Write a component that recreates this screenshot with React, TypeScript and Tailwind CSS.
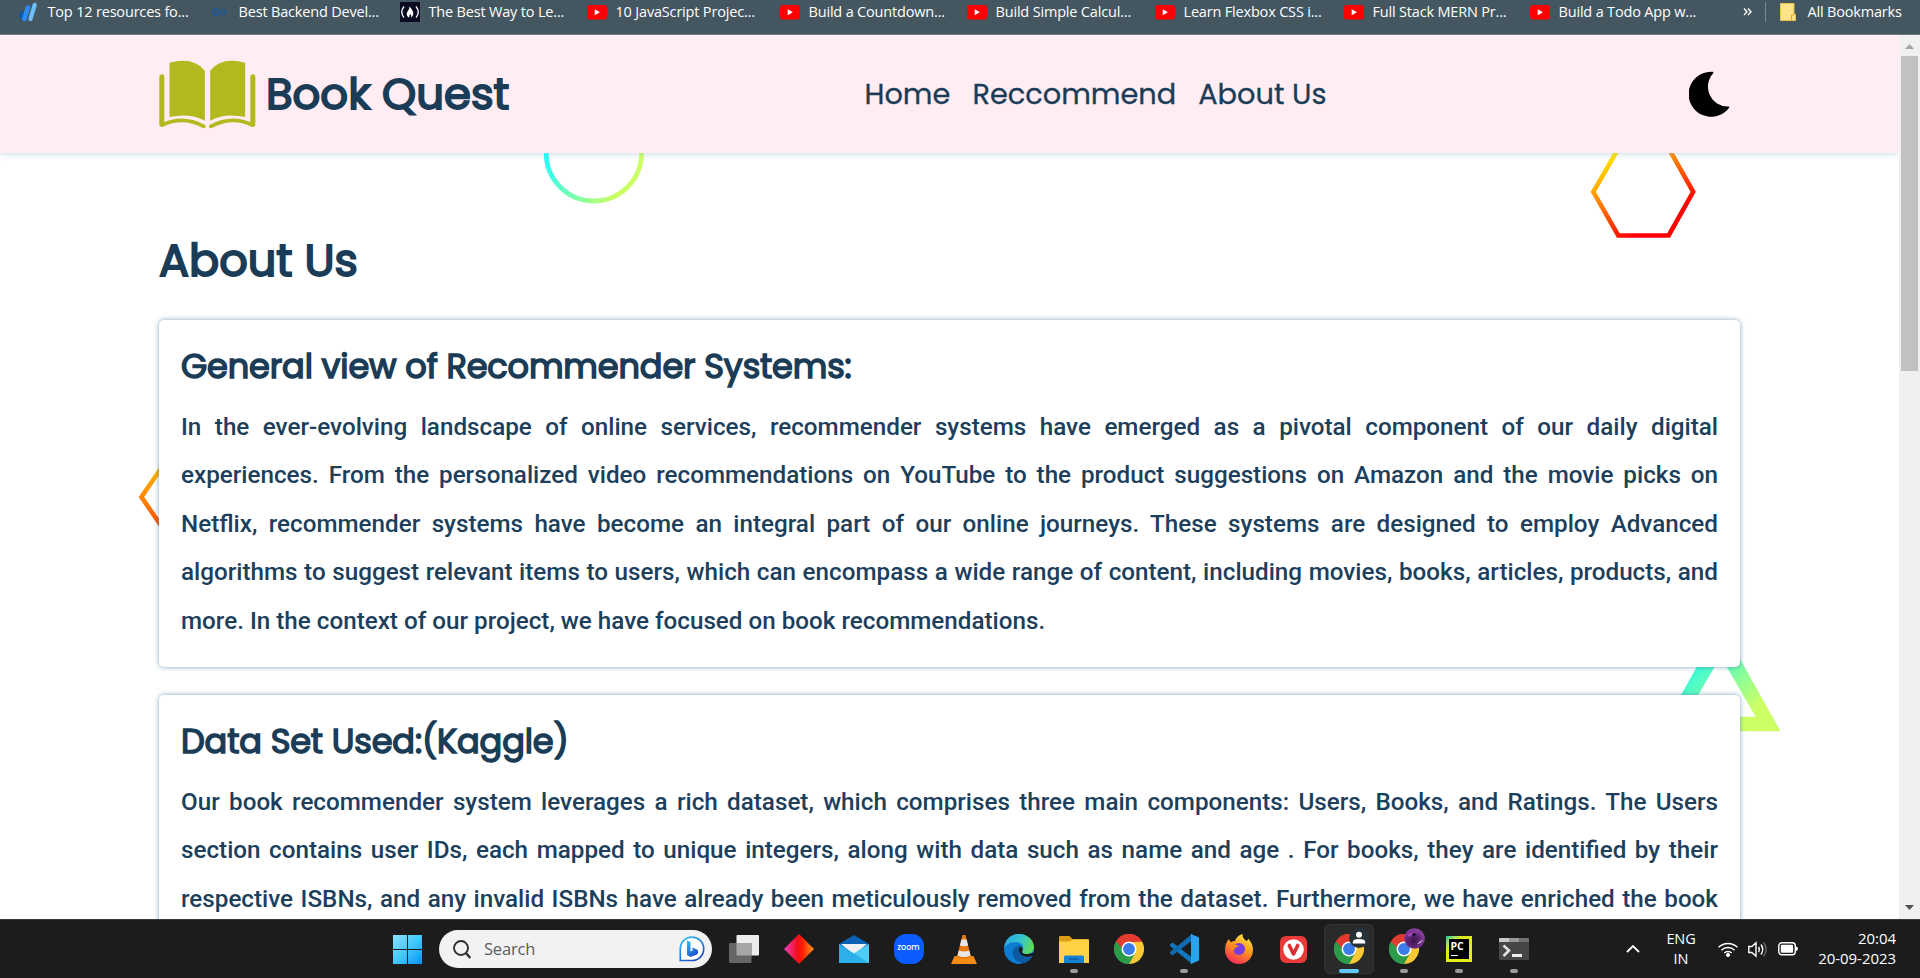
import React from "react";

function YouTubeIcon() {
  return (
    <svg className="h-[15px] w-5" viewBox="0 0 20 15">
      <rect width="20" height="14.5" rx="3" fill="#f00" />
      <path d="M7.7 4.2v6l5.2-3z" fill="#fff" />
    </svg>
  );
}

function StripesIcon() {
  return (
    <svg className="h-5 w-5" viewBox="0 0 20 20" fill="none" strokeLinecap="round">
      <path d="M2.5 11.5 2.2 15" stroke="#0a5aa8" strokeWidth="4" />
      <path d="M9 5.5 5.3 17" stroke="#2b8af5" strokeWidth="4.6" />
      <path d="M15.7 2.8 11.5 17" stroke="#6cc0ff" strokeWidth="4.2" />
    </svg>
  );
}

function InfinityIcon() {
  return (
    <svg className="h-4 w-5" viewBox="0 0 20 16" fill="none" stroke="#1b5a97" strokeWidth="1.6">
      <path d="M8.5 5.8C6.5 3.5 2.8 4.8 2.8 8s3.7 4.5 5.7 2.2l2-2.7c2-2.7 4.8-1.8 4.8.8s-2.8 3.3-4.6 1.4M5 8h3" />
    </svg>
  );
}

function CampIcon() {
  return (
    <svg className="h-5 w-5" viewBox="0 0 20 20">
      <rect width="20" height="20" fill="#0a0a23" />
      <path d="M4 4.5Q-.5 10 4 15.5M16 4.5Q20.5 10 16 15.5" stroke="#fff" strokeWidth="1.3" fill="none" />
      <path d="M9.3 4.5C12 7 13.5 9.5 13.3 12q-.3 2.5-2.3 3.5.8-1.8-.6-3.5-1.8 1.5-.9 3.5-2.8-.8-2.8-3.5 0-1.8 1.5-3.5 1.3-1.5 1.1-4z" fill="#fff" />
    </svg>
  );
}

const bookmarks = [
  { label: "Top 12 resources fo...", icon: <StripesIcon />, width: "w-[191px]" },
  { label: "Best Backend Devel...", icon: <InfinityIcon />, width: "w-[190px]" },
  { label: "The Best Way to Le...", icon: <CampIcon />, width: "w-[187px]" },
  { label: "10 JavaScript Projec...", icon: <YouTubeIcon />, width: "w-[193px]" },
  { label: "Build a Countdown...", icon: <YouTubeIcon />, width: "w-[187px]" },
  { label: "Build Simple Calcul...", icon: <YouTubeIcon />, width: "w-[188px]" },
  { label: "Learn Flexbox CSS i...", icon: <YouTubeIcon />, width: "w-[189px]" },
  { label: "Full Stack MERN Pr...", icon: <YouTubeIcon />, width: "w-[186px]" },
  { label: "Build a Todo App w...", icon: <YouTubeIcon />, width: "w-[213px]" },
];

function BookmarkBar() {
  return (
    <div className="flex h-[35px] shrink-0 items-start border-b border-[#6d7c84] bg-[#44565f] pl-[18.5px] font-['Open_Sans',sans-serif] text-[14.5px] leading-6 tracking-[-0.18px] text-white">
      {bookmarks.map((b) => (
        <div key={b.label} className={`flex h-6 shrink-0 items-center gap-[9px] whitespace-nowrap ${b.width}`}>
          {b.icon}
          <span>{b.label}</span>
        </div>
      ))}
      <svg className="mt-2 h-2 w-[9px]" viewBox="0 0 9 8" fill="none" stroke="#fff" strokeWidth="1.4">
        <path d="m1 .5 3 3.3-3 3.3M5 .5l3 3.3-3 3.3" />
      </svg>
      <div className="mt-0.5 ml-[13px] h-5 w-px bg-[#7c8990]" />
      <svg className="mt-[3px] ml-[14px] h-[18px] w-4" viewBox="0 0 16 18">
        <path d="M.5.5h13.5v11h1.5v6H.5z" fill="#ffe28a" stroke="#e8c24c" />
        <path d="M11.5 17.5v-5.5H14" fill="none" stroke="#d9a922" />
      </svg>
      <span className="ml-3 whitespace-nowrap">All Bookmarks</span>
    </div>
  );
}

function BookLogo() {
  return (
    <svg className="h-[69px] w-[97px]" viewBox="57 70 290 207">
      <g fill="#b0ba1f">
        <path d="M88 78Q160 60 194 102V252Q150 228 88 241Z" />
        <path d="M315 78Q243 60 210 102V252Q254 228 315 241Z" />
      </g>
      <g fill="none" stroke="#b0ba1f" strokeLinecap="round" strokeLinejoin="round">
        <path d="M65 120V263M338 120V263" strokeWidth="15" />
        <path d="M66 265Q128 235 191 269M337 265Q275 235 212 269" strokeWidth="11" />
      </g>
    </svg>
  );
}

function Header() {
  return (
    <header className="relative z-10 flex h-[118px] items-center bg-[#ffedf3] pl-[159px] font-[Poppins,Inter,sans-serif] text-[#1a3c56] shadow-[0_1px_6px_rgba(120,165,205,0.4)]">
      <div className="flex w-[705.5px] items-center gap-[10px]">
        <BookLogo />
        <span className="text-[43.4px] leading-none [-webkit-text-stroke:1.9px_#1a3c56]">Book Quest</span>
      </div>
      <nav className="flex gap-[22px] whitespace-nowrap text-[28.8px] leading-none [-webkit-text-stroke:0.3px_#1a3c56]">
        <a>Home</a>
        <a>Reccommend</a>
        <a>About Us</a>
      </nav>
      <svg className="mr-[169px] ml-auto h-[46px] w-[41px]" viewBox="0 0 41 46">
        <path d="M23.5.8A22.5 22.5 0 1 0 40.3 36.5Q40.5 35.3 39 35.5A19.8 19.8 0 0 1 24 2.5Q25 1 23.5.8Z" />
      </svg>
    </header>
  );
}

function BackgroundShapes() {
  return (
    <svg className="absolute inset-0 h-full w-full" viewBox="0 35 1899 885" fill="none">
      <defs>
        <linearGradient id="aqua" x1="0" y1="0.3" x2="1" y2="0.7">
          <stop offset="0.05" stopColor="#2ff" />
          <stop offset="0.85" stopColor="#cf6" />
        </linearGradient>
        <linearGradient id="tri" gradientUnits="userSpaceOnUse" x1="1697" y1="660" x2="1752" y2="713">
          <stop offset="0" stopColor="#2ffbe0" />
          <stop offset="1" stopColor="#cf6" />
        </linearGradient>
        <linearGradient id="fire" x1="0.1" y1="0.1" x2="0.7" y2="1">
          <stop offset="0" stopColor="#fe0" />
          <stop offset="0.85" stopColor="#f00" />
        </linearGradient>
        <linearGradient id="ember" x1="0" y1="0" x2="0.2" y2="1">
          <stop offset="0.1" stopColor="#ffc400" />
          <stop offset="0.9" stopColor="#f40" />
        </linearGradient>
      </defs>
      <circle cx="593.5" cy="153.5" r="47.7" stroke="url(#aqua)" strokeWidth="4.8" />
      <path d="M1594 192 1619.200 148.5H1669.500L1694 192 1669.500 235.700H1619Z" stroke="url(#fire)" strokeWidth="4.6" />
      <path d="M140.500 497.5 169 456H210L237 497.5 210 539H169Z" stroke="url(#ember)" strokeWidth="4.6" />
      <path d="M1721.500 625 1781.500 732H1661.500ZM1721.500 657 1686.500 717.5H1756.500Z" fill="url(#tri)" fillRule="evenodd" />
    </svg>
  );
}

const sections = [
  {
    title: "General view of Recommender Systems:",
    body: "In the ever-evolving landscape of online services, recommender systems have emerged as a pivotal component of our daily digital experiences. From the personalized video recommendations on YouTube to the product suggestions on Amazon and the movie picks on Netflix, recommender systems have become an integral part of our online journeys. These systems are designed to employ Advanced algorithms to suggest relevant items to users, which can encompass a wide range of content, including movies, books, articles, products, and more. In the context of our project, we have focused on book recommendations.",
    clipped: false,
  },
  {
    title: "Data Set Used:(Kaggle)",
    body: "Our book recommender system leverages a rich dataset, which comprises three main components: Users, Books, and Ratings. The Users section contains user IDs, each mapped to unique integers, along with data such as name and age . For books, they are identified by their respective ISBNs, and any invalid ISBNs have already been meticulously removed from the dataset. Furthermore, we have enriched the book",
    clipped: true,
  },
];

function Content() {
  return (
    <main className="relative flex w-[1740px] flex-col pl-[159px] text-[#1a3c56]">
      <h1 className="mt-[81px] font-[Poppins,Inter,sans-serif] text-[44.6px] leading-[54px] [-webkit-text-stroke:1.9px_#1a3c56]">About Us</h1>
      <div className="mt-[32px] flex flex-col gap-[28px]">
        {sections.map((s) => (
          <section
            key={s.title}
            className="h-[347px] w-[1581px] shrink-0 rounded-[5px] bg-white px-[22px] pt-[22px] shadow-[0_0_5px_rgba(70,125,170,0.7)]"
          >
            <h2 className="font-[Poppins,Inter,sans-serif] text-[33.6px] leading-[50px] tracking-[-0.14px] [-webkit-text-stroke:1.5px_#1a3c56]">{s.title}</h2>
            <p className={`mt-[11px] text-justify font-[Roboto,sans-serif] text-[24.22px] leading-[48.4px] font-medium text-[#1c405c] ${s.clipped ? "[text-align-last:justify]" : ""}`}>
              {s.body}
            </p>
          </section>
        ))}
      </div>
    </main>
  );
}

function Scrollbar() {
  return (
    <div className="flex w-[21px] shrink-0 flex-col items-center bg-[#f0f0f0]">
      <svg className="mt-[9px] h-[5px] w-[9px]" viewBox="0 0 9 5">
        <path d="M4.5 0 9 5H0z" fill="#a3a3a3" />
      </svg>
      <div className="mt-[7px] h-[315px] w-[17px] bg-[#c1c1c1]" />
      <svg className="mt-auto mb-[9px] h-[5px] w-[9px]" viewBox="0 0 9 5">
        <path d="M4.5 5 0 0h9z" fill="#505050" />
      </svg>
    </div>
  );
}

function ChromeIcon() {
  return (
    <svg className="h-[30px] w-[30px]" viewBox="0 0 48 48">
      <path d="M24 24 3.2 12A24 24 0 0 1 44.8 12Z" fill="#e33b2e" />
      <path d="M24 24 44.8 12A24 24 0 0 1 24 48Z" fill="#fcc934" />
      <path d="M24 24V48A24 24 0 0 1 3.2 12Z" fill="#2c9c4b" />
      <path d="M24 12H44.8L34.4 30 24 48 34 24Z" fill="#fcc934" />
      <path d="M13.6 30 3.2 12 14 24 24 36 34.4 30 24 48A24 24 0 0 1 3.2 12Z" fill="#2c9c4b" />
      <path d="M3.2 12A24 24 0 0 1 44.8 12L24 13 14 24Z" fill="#e33b2e" />
      <circle cx="24" cy="24" r="12" fill="#fff" />
      <circle cx="24" cy="24" r="9.5" fill="#3b7de8" />
    </svg>
  );
}

function WindowsIcon() {
  return (
    <svg className="h-[29px] w-[29px]" viewBox="0 0 29 29">
      <defs>
        <linearGradient id="win" gradientUnits="userSpaceOnUse" x1="0" y1="0" x2="29" y2="29">
          <stop stopColor="#8be0fd" />
          <stop offset="0.5" stopColor="#45c8fb" />
          <stop offset="1" stopColor="#0a90f5" />
        </linearGradient>
      </defs>
      <path d="M0 0h14v14H0zM15 0h14v14H15zM0 15h14v14H0zM15 15h14v14H15z" fill="url(#win)" />
    </svg>
  );
}

function BingIcon() {
  return (
    <svg className="h-[26px] w-[26px]" viewBox="0 0 26 26">
      <defs>
        <linearGradient id="bing" x1="0" y1="0" x2="0.6" y2="1">
          <stop stopColor="#35c3f5" />
          <stop offset="1" stopColor="#1b4fc9" />
        </linearGradient>
      </defs>
      <path d="M1.3 24.5V13A11.7 11.7 0 1 1 13 24.5Z" fill="#fff" stroke="url(#bing)" strokeWidth="1.7" />
      <path d="M8 4.5 11.5 6v9.5l2.500-1.300-1.300-3 5.300 2.300c1.600.9 1.600 3.800 0 5L11.500 21 8 19Z" fill="url(#bing)" />
    </svg>
  );
}

function TaskViewIcon() {
  return (
    <svg className="h-[28px] w-[30px]" viewBox="0 0 30 28">
      <rect x="7.5" width="22.5" height="20.5" rx="1" fill="#ededed" />
      <rect y="8" width="22.5" height="20" rx="1" fill="#666" />
      <rect x="7.5" y="8" width="15" height="12.5" fill="#a5a5a5" />
    </svg>
  );
}

function DiamondIcon() {
  return (
    <svg className="h-[30px] w-[30px]" viewBox="0 0 30 30">
      <defs>
        <linearGradient id="dia">
          <stop stopColor="#f03fc0" />
          <stop offset="0.45" stopColor="#f20d1e" />
          <stop offset="0.6" stopColor="#ff1a00" />
          <stop offset="1" stopColor="#ff9a1a" />
        </linearGradient>
      </defs>
      <path d="M15 0 30 15 15 30 0 15Z" fill="url(#dia)" />
    </svg>
  );
}

function MailIcon() {
  return (
    <svg className="h-[28px] w-[30px]" viewBox="0 0 30 28">
      <path d="M0 9 15 0l15 9v5H0Z" fill="#0b62b5" />
      <path d="M2 9h26L15 20Z" fill="#eef2f5" />
      <path d="M0 9 15 18.5 30 9V28H0Z" fill="#2cb0ea" />
      <path d="M30 9 15 18.5 30 28Z" fill="#50cdf7" />
    </svg>
  );
}

function ZoomIcon() {
  return (
    <div className="flex h-[30px] w-[30px] items-center justify-center rounded-[12px] bg-[#0b5cff] font-[Poppins,sans-serif] text-[8px] leading-none font-medium text-white">
      <span className="-mt-0.5">zoom</span>
    </div>
  );
}

function ConeIcon() {
  return (
    <svg className="h-[29px] w-[26px]" viewBox="0 0 26 29">
      <path d="M3.5 21h19l3.5 8H0Z" fill="#f58a14" />
      <path d="M11.5 0h3l5.5 22q-7 4-14 0Z" fill="#e67a10" />
      <path d="M10.4 4.5h5.2l1.5 6q-4 1.5-8.2 0ZM7.8 15.5q5 2 10.5 0l1.2 5q-6.500 3-13 0Z" fill="#e6e6e6" />
    </svg>
  );
}

function EdgeIcon() {
  return (
    <svg className="h-[30px] w-[30px]" viewBox="0 0 30 30">
      <defs>
        <linearGradient id="edgeTop" x1="0" y1="0.3" x2="1" y2="0.6">
          <stop stopColor="#2aa7e8" />
          <stop offset="0.5" stopColor="#36c5d0" />
          <stop offset="1" stopColor="#62dd50" />
        </linearGradient>
      </defs>
      <circle cx="15" cy="15" r="15" fill="#0f7cd3" />
      <path d="M0 14C1 5 7 0 15 0c9 0 15 6.500 15 13 0 5-4 7-7.500 7-4 0-5-1.500-4-3.500C21 11 16 8 11.500 8 6 8 2 11 0 14Z" fill="url(#edgeTop)" />
      <path d="M9 16c-2 6 3 13 11 13 4-1 7-4 8.500-7C22 26 14 22 15 15c.2-1.500 1-2.500 1-2.500C12 11.500 9.500 14 9 16Z" fill="#0c59a4" />
      <path d="M16 12.500c-2 2-1.500 8 4 10 4 1.300 8-.5 8.800-.7l1.200 1.200V18c-2 1.500-4.500 2-7.500 2-4 0-5-1.500-4-3.500.7-1.500 0-3.500-2.500-4Z" fill="#1c1c1c" />
    </svg>
  );
}

function FolderIcon() {
  return (
    <svg className="h-[27px] w-[30px]" viewBox="0 0 30 27">
      <path d="M0 1Q0 0 1 0h9.500l3 3H28q2 0 2 2v8H0Z" fill="#dc9d10" />
      <path d="M0 5.500h10.500L14 3.500h16V27H0Z" fill="#ffd145" />
      <path d="M5 27v-6q0-1.500 1.500-1.500h17Q25 19.500 25 21v6Z" fill="#1583d3" />
      <path d="M10 23h10" stroke="#0a5a9c" strokeWidth="1.3" />
    </svg>
  );
}

function VsCodeIcon() {
  return (
    <svg className="h-[30px] w-[30px]" viewBox="0 0 30 30">
      <path d="M1 10.500 3.500 8.500 23 23.500V30L1 12Z" fill="#0f79c0" />
      <path d="M1 19.500 3.500 21.500 23 6.500V0L1 18Z" fill="#0f6cb0" />
      <path d="M22 0 30 3.500v23L22 30Q21 30 22 28V2Q21 0 22 0Z" fill="#2aa3ef" />
    </svg>
  );
}

function FirefoxIcon() {
  return (
    <svg className="h-[30px] w-[28px]" viewBox="0 0 28 30">
      <defs>
        <linearGradient id="fox" x1="0.8" y1="0" x2="0.3" y2="1">
          <stop stopColor="#fff04a" />
          <stop offset="0.45" stopColor="#ff9a1f" />
          <stop offset="1" stopColor="#f5285a" />
        </linearGradient>
      </defs>
      <path d="M4 5q.3 2 2 3.200Q7.500 7 10 7q2-5.500 7.500-7-.5 4 4 7 2-1 1.500-2.500Q28 9.500 28 16a14 14 0 0 1-28 0Q0 9 4 5Z" fill="url(#fox)" />
      <circle cx="14" cy="15" r="6" fill="#7a3ee0" />
      <path d="M6 11q5-1.500 8 1.500-4.500.5-5 4-4-.5-3-5.500Z" fill="#ff8a1f" />
    </svg>
  );
}

function VivaldiIcon() {
  return (
    <svg className="h-[27px] w-[27px]" viewBox="0 0 27 27">
      <rect width="27" height="27" rx="6" fill="#ea3939" />
      <circle cx="13.5" cy="13.5" r="10.3" fill="#fff" />
      <path d="M9.3 9.5 13.5 18 17.7 9.5" fill="none" stroke="#d92f33" strokeWidth="3.6" strokeLinecap="round" strokeLinejoin="round" />
    </svg>
  );
}

function PyCharmIcon() {
  return (
    <div className="flex h-[26px] w-[26px] bg-linear-to-br from-[#21d789] from-5% via-[#dfe81c] via-30% to-[#e8f01c] p-[3px]">
      <div className="flex h-5 w-5 flex-col bg-black pt-[3px] pl-[2px] font-['Open_Sans',sans-serif] text-[10.5px] leading-[9px] font-bold text-white">
        PC
        <span className="mt-[4px] h-px w-[7px] bg-white" />
      </div>
    </div>
  );
}

function TerminalIcon() {
  return (
    <svg className="h-[22px] w-[30px]" viewBox="0 0 30 22">
      <rect width="30" height="22" rx="1.5" fill="#474747" />
      <path d="M0 4V1Q0 0 1 0h9v4Z" fill="#c9c9c9" />
      <path d="M10 0h10v4H10Z" fill="#999" />
      <path d="M20 0h9q1 0 1 1v3H20Z" fill="#707070" />
      <path d="m4.5 7.5 5.5 5-5.5 5.5" fill="none" stroke="#e2e2e2" strokeWidth="2.6" />
      <path d="M13 17.5h10" stroke="#f0f0f0" strokeWidth="3" />
    </svg>
  );
}

function ProfileBadge() {
  return (
    <svg className="absolute -top-[6px] right-[-5px] h-5 w-5" viewBox="0 0 20 20">
      <circle cx="10" cy="10" r="10" fill="#263238" />
      <circle cx="10" cy="6.8" r="3" fill="#fff" />
      <path d="M3.8 15.5v-1.5q0-3 6.2-3t6.2 3v1.5Z" fill="#fff" />
    </svg>
  );
}

function PurpleBadge() {
  return (
    <svg className="absolute -top-[6px] right-[-6px] h-[21px] w-[21px]" viewBox="0 0 21 21">
      <defs>
        <radialGradient id="orb" cx="0.45" cy="0.6" r="0.55">
          <stop stopColor="#3a1646" />
          <stop offset="0.6" stopColor="#64287a" />
          <stop offset="1" stopColor="#8b3fa3" />
        </radialGradient>
      </defs>
      <circle cx="10.5" cy="10.5" r="10.3" fill="url(#orb)" />
      <path d="M3 7Q9 2.500 15 4 9 5 6 9Z" fill="#a349bd" />
      <path d="M13 16.500q4-1 6-5-3.500 1.500-6 5Z" fill="#d3b3dc" />
      <circle cx="10" cy="6.5" r="1.8" fill="#1e0a28" />
    </svg>
  );
}

const apps = [
  { name: "tasks", icon: <TaskViewIcon />, mark: "none" },
  { name: "diamond", icon: <DiamondIcon />, mark: "none" },
  { name: "mail", icon: <MailIcon />, mark: "none" },
  { name: "zoom", icon: <ZoomIcon />, mark: "none" },
  { name: "cone", icon: <ConeIcon />, mark: "none" },
  { name: "edge", icon: <EdgeIcon />, mark: "none" },
  { name: "folder", icon: <FolderIcon />, mark: "dot" },
  { name: "chrome", icon: <ChromeIcon />, mark: "none" },
  { name: "code", icon: <VsCodeIcon />, mark: "dot" },
  { name: "firefox", icon: <FirefoxIcon />, mark: "none" },
  { name: "vivaldi", icon: <VivaldiIcon />, mark: "none" },
  { name: "chrome-profile", icon: <ChromeIcon />, mark: "active", badge: <ProfileBadge /> },
  { name: "chrome-purple", icon: <ChromeIcon />, mark: "dot", badge: <PurpleBadge /> },
  { name: "pycharm", icon: <PyCharmIcon />, mark: "dot" },
  { name: "terminal", icon: <TerminalIcon />, mark: "dot" },
];

function Taskbar() {
  return (
    <footer className="flex h-[59px] shrink-0 items-center border-t border-[#3a3a3a] bg-[#1c1c1c] pl-[393px] font-['Open_Sans',sans-serif] text-white">
      <WindowsIcon />
      <div className="ml-[17px] flex h-[38px] w-[273px] items-center rounded-full bg-[#f2f2f2] pr-[7px] pl-[14px]">
        <svg className="h-[19px] w-[18px]" viewBox="0 0 18 19" fill="none" stroke="#2e2e2e">
          <circle cx="8" cy="8" r="7" strokeWidth="1.9" />
          <path d="m13 13 4.3 5" strokeWidth="2.5" />
        </svg>
        <span className="ml-[13px] text-[16.5px] leading-none tracking-[-0.2px] text-[#5c5c5c]">Search</span>
        <span className="ml-auto">
          <BingIcon />
        </span>
      </div>
      <div className="ml-[4px] flex">
        {apps.map((a) => (
          <div key={a.name} className="flex w-[55px] justify-center">
            <div
              className={
                a.mark === "active"
                  ? "flex h-[50px] w-[50px] flex-col items-center rounded-[5px] border border-[#333] bg-[#2a2a2a]"
                  : "flex h-[50px] w-[50px] flex-col items-center border border-transparent"
              }
            >
              <div className="relative mt-[9px] flex h-[30px] items-center">
                {a.icon}
                {a.badge}
              </div>
              {a.mark === "dot" && <div className="mt-[5px] h-1 w-2 rounded-full bg-[#9a9a9a]" />}
              {a.mark === "active" && <div className="mt-[5px] h-1 w-5 rounded-full bg-[#5fc8fb]" />}
            </div>
          </div>
        ))}
      </div>
      <div className="mr-[24px] ml-auto flex items-center">
        <svg className="h-2 w-[14px]" viewBox="0 0 14 8" fill="none" stroke="#fff" strokeWidth="1.8">
          <path d="m1 7 6-6 6 6" />
        </svg>
        <div className="ml-[25px] w-[32px] text-center text-[14.5px] leading-5 tracking-[-0.1px]">
          ENG
          <br />
          IN
        </div>
        <svg className="ml-[21px] h-[15px] w-5" viewBox="0 0 20 15" fill="none" stroke="#fff" strokeWidth="1.4">
          <path d="M.6 5.3a13.5 13.5 0 0 1 18.8 0M3.4 8.2a9.5 9.5 0 0 1 13.2 0M6.3 11a5.3 5.3 0 0 1 7.4 0" />
          <circle cx="10" cy="13" r="1.3" fill="#fff" />
        </svg>
        <svg className="ml-[10px] h-[17px] w-5" viewBox="0 0 20 17" fill="none" stroke="#fff" strokeWidth="1.4">
          <path d="M.8 5.5h3L8 1.8v13.4L3.8 11.5h-3ZM10.5 6q1.7 2.5 0 5M13 3.5q3.5 5 0 10" />
          <path d="M15.6 1.5q5 7 0 14" stroke="#666" />
        </svg>
        <svg className="ml-[10px] h-[14px] w-5" viewBox="0 0 20 14">
          <rect x=".8" y=".8" width="16.5" height="12" rx="3" fill="none" stroke="#fff" strokeWidth="1.4" />
          <rect x="2.8" y="2.8" width="12.3" height="8" rx="1" fill="#fff" />
          <path d="M18 4.5q2 .5 2 2.3t-2 2.3Z" fill="#fff" />
        </svg>
        <div className="-mt-[2px] ml-[18px] w-[80px] text-right text-[15px] leading-5 tracking-[-0.05px] whitespace-nowrap">
          20:04
          <br />
          20-09-2023
        </div>
      </div>
    </footer>
  );
}

export default function App() {
  return (
    <div className="flex h-[978px] w-[1920px] flex-col overflow-hidden bg-white">
      <BookmarkBar />
      <div className="flex min-h-0 flex-1">
        <div className="relative min-w-0 flex-1 overflow-hidden">
          <BackgroundShapes />
          <Header />
          <Content />
        </div>
        <Scrollbar />
      </div>
      <Taskbar />
    </div>
  );
}
